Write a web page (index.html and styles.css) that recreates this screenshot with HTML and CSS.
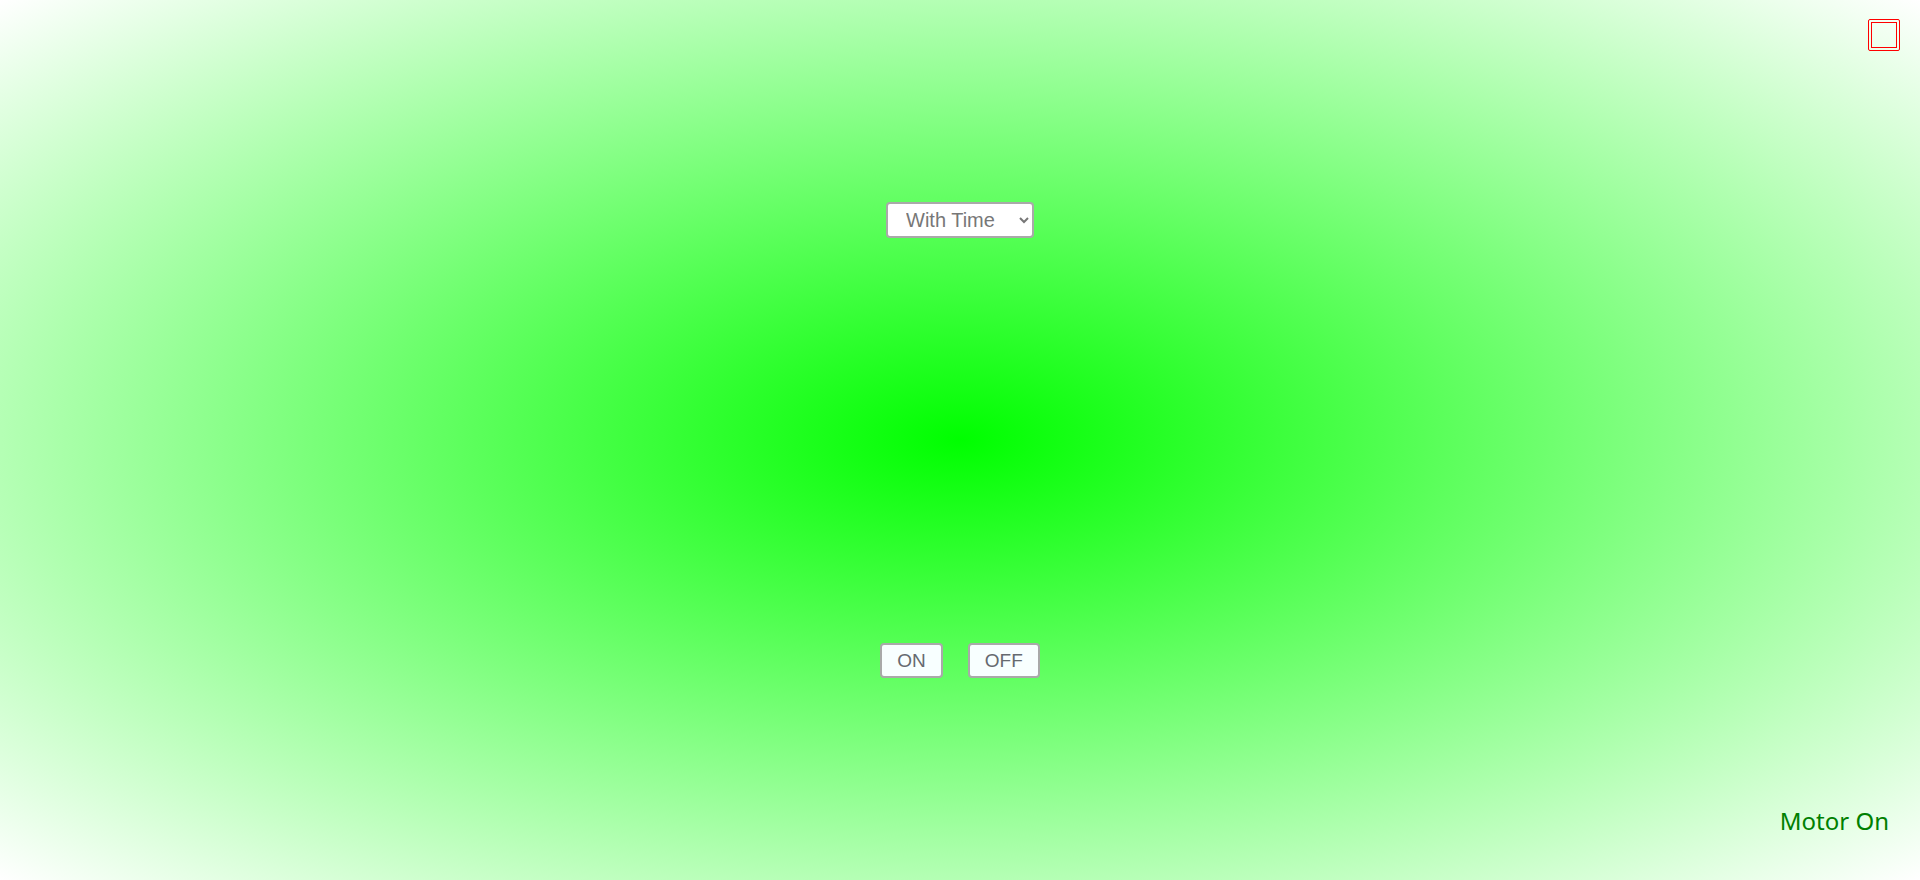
FILE: index.html
```html
<!DOCTYPE html>
<html>
<head>
<meta charset="utf-8">
<link rel="stylesheet" href="styles.css">
</head>
<body>
<div class="page">
  <div class="topbar">
    <input type="checkbox" class="toggle" aria-label="toggle">
  </div>
  <select class="mode">
    <option>With Time</option>
    <option>Without Time</option>
  </select>
  <div class="buttons">
    <button class="btn">ON</button>
    <button class="btn">OFF</button>
  </div>
  <div class="footer">
    <span class="status">Motor On</span>
  </div>
</div>
</body>
</html>
```
FILE: styles.css
```css
html, body {
  margin: 0;
  padding: 0;
}
body {
  width: 1920px;
  height: 880px;
  overflow: hidden;
  background: radial-gradient(ellipse at 50% 50%, #00ff00, #ffffff);
  font-family: "Liberation Sans", Arial, sans-serif;
}
.page {
  height: 880px;
  display: flex;
  flex-direction: column;
  align-items: center;
}
.topbar {
  align-self: stretch;
  display: flex;
  justify-content: flex-end;
  padding: 19px 20px 0 0;
}
.toggle {
  appearance: none;
  -webkit-appearance: none;
  margin: 0;
  width: 32px;
  height: 32px;
  box-sizing: border-box;
  border: 4px double #ff0000;
  border-radius: 2px;
  background: transparent;
}
.mode {
  margin-top: 151px;
  width: 148px;
  height: 36px;
  box-sizing: border-box;
  font-family: "Liberation Sans", Arial, sans-serif;
  font-size: 20px;
  color: #777777;
  background: #ffffff;
  border: 2px solid #a9a9a9;
  border-radius: 4px;
  padding: 0 4px 0 14px;
  text-align: left;
}
.buttons {
  margin-top: 405px;
  display: flex;
  gap: 25px;
}
.btn {
  height: 35px;
  box-sizing: border-box;
  font-family: "Liberation Sans", Arial, sans-serif;
  font-size: 19px;
  color: #666a70;
  background: #f8ffff;
  border: 2px solid #a9a9a9;
  border-radius: 4px;
  padding: 0 15px;
}
.footer {
  margin-top: auto;
  align-self: stretch;
  display: flex;
  justify-content: flex-end;
  padding: 0 31px 44px 0;
}
.status {
  font-family: "Noto Sans", "Open Sans", sans-serif;
  font-size: 24px;
  line-height: 30px;
  color: #008000;
}
```
